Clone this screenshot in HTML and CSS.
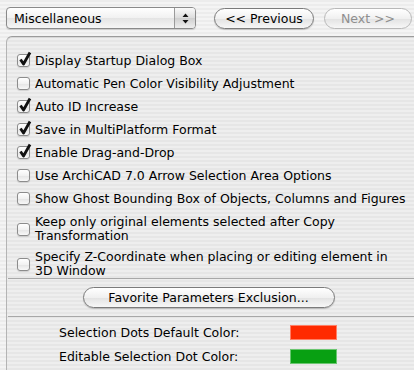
FILE: index.html
```html
<!DOCTYPE html>
<html lang="en">
<head>
  <meta charset="UTF-8">
  <title>Miscellaneous</title>
  <link rel="stylesheet" href="styles.css">
</head>
<body>
  <div class="top-bar">
    <div class="popup">
      <span class="popup-label">Miscellaneous</span>
      <span class="popup-arrows">
        <svg width="7" height="11" viewBox="0 0 7 11"><path d="M3.5 0.5 L6.5 4 L0.5 4 Z M0.5 7 L6.5 7 L3.5 10.5 Z" fill="#111"/></svg>
      </span>
    </div>
    <button class="pill">&lt;&lt; Previous</button>
    <button class="pill disabled">Next &gt;&gt;</button>
  </div>

  <div class="panel">
    <div class="options">
      <div class="opt"><span class="box checked"></span>Display Startup Dialog Box</div>
      <div class="opt"><span class="box"></span>Automatic Pen Color Visibility Adjustment</div>
      <div class="opt"><span class="box checked"></span>Auto ID Increase</div>
      <div class="opt"><span class="box checked"></span>Save in MultiPlatform Format</div>
      <div class="opt"><span class="box checked"></span>Enable Drag-and-Drop</div>
      <div class="opt"><span class="box"></span>Use ArchiCAD 7.0 Arrow Selection Area Options</div>
      <div class="opt"><span class="box"></span>Show Ghost Bounding Box of Objects, Columns and Figures</div>
      <div class="opt two"><span class="box"></span><span>Keep only original elements selected after Copy<br>Transformation</span></div>
      <div class="opt two"><span class="box"></span><span>Specify Z-Coordinate when placing or editing element in<br>3D Window</span></div>
    </div>

    <div class="button-row">
      <button class="pill wide">Favorite Parameters Exclusion...</button>
    </div>

    <div class="colors">
      <span>Selection Dots Default Color:</span>
      <span class="swatch red"></span>
      <span>Editable Selection Dot Color:</span>
      <span class="swatch green"></span>
    </div>
  </div>
</body>
</html>
```

FILE: styles.css
```css
body {
  margin: 0;
  width: 414px;
  height: 370px;
  overflow: hidden;
  font-family: 'DejaVu Sans', 'Liberation Sans', sans-serif;
  font-size: 12.5px;
  color: #000;
  background: repeating-linear-gradient(180deg, #ececec 0, #ececec 2px, #f4f4f4 2px, #f4f4f4 4px);
}

.top-bar {
  display: flex;
  align-items: center;
  padding: 7px 0 0 6px;
  height: 22px;
}

.popup {
  display: flex;
  align-items: center;
  width: 190px;
  height: 22px;
  box-sizing: border-box;
  border: 1px solid #8a8a8a;
  border-radius: 4px;
  background: linear-gradient(#ffffff, #f1f1f1 50%, #e4e4e4 51%, #f6f6f6);
  box-shadow: 0 1px 1px rgba(0, 0, 0, 0.15);
}

.popup-label {
  flex: 1;
  padding-left: 7px;
}

.popup-arrows {
  display: flex;
  align-items: center;
  justify-content: center;
  width: 20px;
  height: 100%;
  border-left: 1px solid #9a9a9a;
  border-radius: 0 3px 3px 0;
  background: linear-gradient(#fafafa, #dcdcdc 50%, #cfcfcf 51%, #eeeeee);
}

.pill {
  font: inherit;
  height: 21px;
  padding: 0;
  white-space: nowrap;
  border: 1px solid #7b7b7b;
  border-radius: 11px;
  background: linear-gradient(#ffffff, #f0f0f0 50%, #e2e2e2 51%, #f7f7f7);
  box-shadow: 0 1px 1px rgba(0, 0, 0, 0.2);
  color: #000;
}

.top-bar .pill {
  margin-left: 18px;
  width: 100px;
}

.top-bar .pill.disabled {
  margin-left: 10px;
  width: 88px;
  color: #8e8e8e;
  border-color: #b8b8b8;
  box-shadow: none;
}

.panel {
  margin: 7px 0 0 6px;
  border-top: 1px solid #9c9c9c;
  border-left: 1px solid #b4b4b4;
  border-top-left-radius: 6px;
  background: rgba(0, 0, 0, 0.025);
  height: 333px;
  box-shadow: inset 0 1px 0 #d8d8d8;
}

.options {
  padding-top: 12px;
}

.opt {
  display: flex;
  align-items: center;
  height: 23px;
  padding-left: 10px;
  white-space: nowrap;
}

.opt.two {
  height: auto;
  line-height: 14px;
  padding-top: 5px;
  padding-bottom: 2px;
}

.opt.two:last-child {
  padding-bottom: 0;
}

.box {
  flex: none;
  width: 13px;
  height: 13px;
  margin-right: 5px;
  box-sizing: border-box;
  border: 1px solid #8c8c8c;
  border-radius: 3px;
  background: linear-gradient(#ffffff, #f2f2f2 50%, #e4e4e4 51%, #f8f8f8);
  box-shadow: 0 1px 1px rgba(0, 0, 0, 0.12);
  position: relative;
}

.box.checked::after {
  content: "";
  position: absolute;
  left: 0;
  top: -4px;
  width: 14px;
  height: 15px;
  background: url("data:image/svg+xml;utf8,<svg xmlns='http://www.w3.org/2000/svg' width='14' height='15' viewBox='0 0 14 15'><path d='M2.5 8.5 L5.5 13 L12 1.5' fill='none' stroke='%23111' stroke-width='2.8' stroke-linejoin='round'/></svg>") no-repeat;
}

.button-row {
  border-top: 1px solid #a8a8a8;
  border-bottom: 1px solid #a8a8a8;
  margin-left: 1px;
  height: 37px;
  display: flex;
  align-items: center;
  justify-content: center;
}

.pill.wide {
  width: 252px;
  height: 21px;
  margin-left: -5px;
}

.colors {
  display: grid;
  grid-template-columns: 231px 47px;
  row-gap: 9px;
  align-items: center;
  padding: 8px 0 0 52px;
}

.swatch {
  height: 15px;
  box-sizing: border-box;
  border: 1px solid rgba(255, 255, 255, 0.4);
}

.swatch.red {
  background: #ff2a00;
}

.swatch.green {
  background: #08a012;
}
```
